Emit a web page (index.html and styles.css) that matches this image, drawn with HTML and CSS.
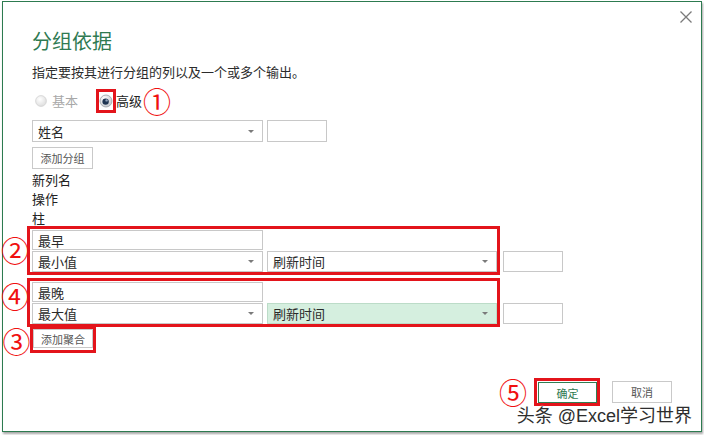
FILE: index.html
```html
<!DOCTYPE html>
<html lang="zh">
<head>
<meta charset="utf-8">
<title>分组依据</title>
<link rel="stylesheet" href="styles.css">
</head>
<body>
<div class="dialog">
  <div class="header">
    <h1 class="title">分组依据</h1>
    <span class="close" aria-label="关闭">
      <svg width="12" height="12" viewBox="0 0 12 12"><path d="M0.5 0.5 L11.5 11.5 M11.5 0.5 L0.5 11.5" stroke="#7a7a7a" stroke-width="1.3" fill="none"/></svg>
    </span>
  </div>
  <p class="subtitle">指定要按其进行分组的列以及一个或多个输出。</p>

  <div class="radio-row">
    <span class="radio radio-off">
      <svg width="12" height="12" viewBox="0 0 12 12">
        <defs><radialGradient id="g1" cx="0.4" cy="0.35" r="0.7"><stop offset="0" stop-color="#ffffff"/><stop offset="1" stop-color="#dcdcdc"/></radialGradient></defs>
        <circle cx="6" cy="6" r="5.4" fill="url(#g1)" stroke="#d2d2d2" stroke-width="0.8"/>
      </svg>
    </span>
    <span class="radio-label disabled">基本</span>
    <span class="mark-box radio-mark">
      <svg width="14" height="14" viewBox="0 0 14 14">
        <defs><radialGradient id="g2" cx="0.35" cy="0.3" r="0.8"><stop offset="0" stop-color="#ffffff"/><stop offset="1" stop-color="#bfc3c8"/></radialGradient></defs>
        <circle cx="7" cy="7" r="6" fill="url(#g2)" stroke="#9aa0a6" stroke-width="0.8"/>
        <circle cx="6.6" cy="7.6" r="3.2" fill="#1f3552"/>
        <circle cx="7.6" cy="6.4" r="1.2" fill="#8fa2ba"/>
      </svg>
    </span>
    <span class="radio-label">高级</span>
    <span class="num num-inline">①</span>
  </div>

  <div class="field-row">
    <div class="select w231"><span>姓名</span><i class="arrow"></i></div>
    <div class="textbox w60"></div>
  </div>
  <button class="btn btn-add">添加分组</button>

  <div class="label first">新列名</div>
  <div class="label">操作</div>
  <div class="label">柱</div>

  <div class="group-row g2">
    <span class="num num-g2">②</span>
    <div class="mark-box group">
      <div class="textbox w231 tall20"><span>最早</span></div>
      <div class="field-row inner">
        <div class="select w231"><span>最小值</span><i class="arrow"></i></div>
        <div class="select w230"><span>刷新时间</span><i class="arrow"></i></div>
      </div>
    </div>
    <div class="textbox w60 side"></div>
  </div>

  <div class="group-row g4">
    <span class="num num-g4">④</span>
    <div class="mark-box group">
      <div class="textbox w231 tall20"><span>最晚</span></div>
      <div class="field-row inner">
        <div class="select w231"><span>最大值</span><i class="arrow"></i></div>
        <div class="select w230 active"><span>刷新时间</span><i class="arrow"></i></div>
      </div>
    </div>
    <div class="textbox w60 side"></div>
  </div>

  <div class="group-row g3">
    <span class="num num-g3">③</span>
    <div class="mark-box add-agg">
      <button class="btn btn-agg">添加聚合</button>
    </div>
  </div>

  <div class="footer">
    <span class="num num-g5">⑤</span>
    <div class="mark-box ok-box">
      <button class="btn btn-ok">确定</button>
    </div>
    <button class="btn btn-cancel">取消</button>
  </div>
  <div class="watermark">头条 @Excel学习世界</div>
</div>
</body>
</html>
```
FILE: styles.css
```css
* { box-sizing: border-box; }
html, body { margin: 0; padding: 0; background: #ffffff; }
body {
  font-family: "Noto Sans CJK SC", "Noto Sans", sans-serif;
  color: #262626;
  width: 704px;
  height: 435px;
  overflow: hidden;
}
.dialog {
  margin: 1px 0 0 2px;
  width: 700px;
  height: 431px;
  border: 1px solid #2d7b50;
  box-shadow: 1px 2px 2px rgba(0, 0, 0, 0.35);
  padding: 0 29px 0 29px;
  background: #fff;
}
.header {
  display: flex;
  justify-content: space-between;
  align-items: flex-start;
  margin-right: -20px;
}
.title {
  margin: 26px 0 0 0;
  font-size: 20px;
  line-height: 26px;
  font-weight: normal;
  color: #2f7a52;
}
.close {
  margin-top: 9px;
  width: 12px;
  height: 12px;
  display: flex;
}
.subtitle {
  margin: 9px 0 0 0;
  font-size: 13px;
  line-height: 18px;
  color: #2b2b2b;
}
.radio-row {
  margin-top: 8px;
  height: 24px;
  display: flex;
  align-items: center;
}
.radio { display: flex; }
.radio-off { margin-left: 3px; margin-right: 5px; }
.radio-label { font-size: 13px; line-height: 18px; color: #222; }
.radio-label.disabled { color: #a8a8a8; }
.mark-box { border: 3px solid #e3141b; }
.radio-mark {
  margin-left: 18px;
  width: 20px;
  height: 24px;
  display: flex;
  align-items: center;
  justify-content: center;
}
.num {
  color: #f01010;
  font-size: 28px;
  line-height: 24px;
  height: 24px;
  display: flex;
  align-items: center;
  justify-content: center;
  font-family: "Noto Sans CJK SC", "DejaVu Sans", sans-serif;
}
.num-inline { margin-left: 1px; }

.field-row { display: flex; gap: 4px; margin-top: 7px; }
.select, .textbox {
  height: 22px;
  border: 1px solid #c8c8c8;
  background: #fff;
  display: flex;
  align-items: center;
  font-size: 13px;
  color: #2a2a2a;
}
.select { justify-content: space-between; padding: 0 8px 0 5px; }
.textbox { padding: 0 5px; }
.w231 { width: 231px; }
.w230 { width: 230px; }
.w60 { width: 60px; }
.tall20 { height: 20px; }
.arrow {
  width: 0;
  height: 0;
  border-left: 3px solid transparent;
  border-right: 3px solid transparent;
  border-top: 3px solid #7a7a7a;
}
.select.active { background: #d5efdf; border-color: #bcdcc8; }

.btn {
  font-family: "Noto Sans CJK SC", "Noto Sans", sans-serif;
  font-size: 11px;
  color: #555;
  background: #fff;
  border: 1px solid #c9c9c9;
  padding: 0;
  display: block;
}
.btn-add { margin-top: 5px; width: 61px; height: 22px; }

.label { font-size: 13px; line-height: 19px; color: #222; }
.label.first { margin-top: 1px; }

.group-row { display: flex; margin-left: -29px; }
.g2 { margin-top: -1px; }
.g4 { margin-top: 3px; }
.g3 { margin-top: -1px; }
.num-g2, .num-g4 { width: 24px; }
.num-g2 { margin-top: 12px; }
.num-g4 { margin-top: 6px; }
.num-g3 { width: 27px; margin-top: 3px; }
.group { padding: 1px 0 0 2px; }
.group .field-row.inner { margin-top: 1px; }
.group .select { height: 21px; }
.side { height: 21px; align-self: flex-end; margin: 0 0 3px 3px; }
.add-agg { display: flex; }
.btn-agg { width: 60px; height: 19px; }

.footer {
  margin-top: 25px;
  display: flex;
  justify-content: flex-end;
  align-items: center;
}
.num-g5 { margin-right: 7px; }
.ok-box { padding: 1px 0 0 1px; }
.btn-ok {
  width: 59px;
  height: 21px;
  border: 1px solid #2f7d52;
  color: #2f7a52;
}
.btn-cancel { margin-left: 12px; width: 60px; height: 22px; }
.watermark {
  margin: 1px -20px 0 0;
  text-align: right;
  font-family: "Liberation Sans", "Noto Sans CJK SC", sans-serif;
  font-size: 18px;
  line-height: 18px;
  color: #2e2e2e;
  text-shadow: 0 0 2px #fff, 0 0 2px #fff;
}
```
